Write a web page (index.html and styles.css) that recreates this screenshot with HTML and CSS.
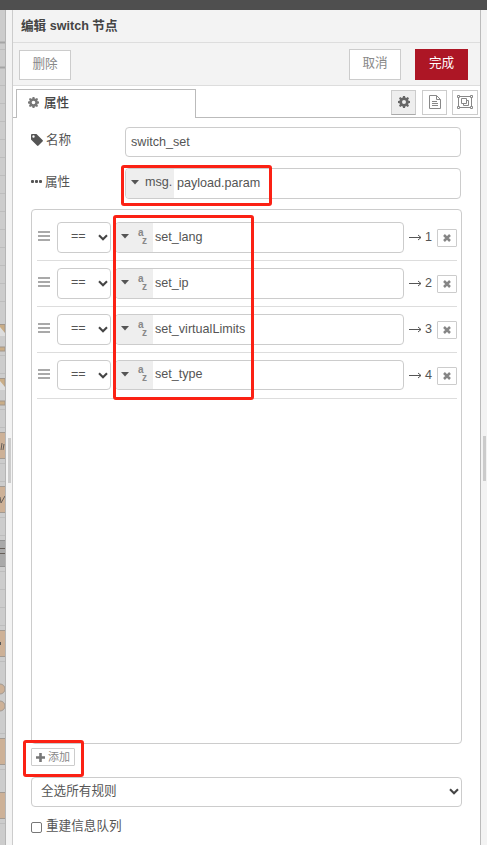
FILE: index.html
```html
<!DOCTYPE html>
<html lang="zh-CN">
<head>
<meta charset="utf-8">
<title>编辑 switch 节点</title>
<link rel="stylesheet" href="styles.css">
</head>
<body>
<svg class="defs" width="0" height="0" aria-hidden="true">
  <symbol id="gear" viewBox="0 0 12 12"><path fill-rule="evenodd" d="M5 0h2l.3 1.6 1 .4L9.7 1 11 2.3l-.9 1.4.4 1L12 5v2l-1.5.3-.4 1 .9 1.4L9.7 11l-1.4-.9-1 .4L7 12H5l-.3-1.5-1-.4-1.4.9L1 9.7l.9-1.4-.4-1L0 7V5l1.5-.3.4-1L1 2.3 2.3 1l1.4 1 1-.4zM6 4a2 2 0 1 0 0 4 2 2 0 0 0 0-4z"/></symbol>
  <symbol id="down" viewBox="0 0 10 7"><path d="M1 1.3 5 5.2 9 1.3" fill="none" stroke="#444" stroke-width="2.1"/></symbol>
  <symbol id="caret" viewBox="0 0 8 5"><path d="M0 0h8L4 4.5z"/></symbol>
  <symbol id="cross" viewBox="0 0 8 8"><path d="M1 1l6 6M7 1 1 7" fill="none" stroke="#868686" stroke-width="2.5"/></symbol>
  <symbol id="bars" viewBox="0 0 12 10"><path d="M0 1h12M0 5h12M0 9h12" fill="none" stroke="#a9a9a9" stroke-width="2"/></symbol>
</svg>
<div class="topbar"></div>
<div class="workspace">
  <svg class="canvas" width="6" height="835" viewBox="0 10 6 835">
    <path fill="#ccc" d="M0 10h6v835H0z"/>
    <path stroke="#bdbdbd" d="M0 49.500h5M0 85.500h5M0 103.500h5M0 121.500h5M0 139.500h5M0 157.500h5M0 175.500h5M0 193.500h5M0 211.500h5M0 229.500h5M0 247.500h5M0 265.500h5M0 283.500h5M0 301.500h5M0 355.500h5M0 373.500h5M0 409.500h5M0 427.500h5M0 463.500h5M0 481.500h5M0 517.500h5M0 535.500h5M0 571.500h5M0 589.500h5M0 607.500h5M0 625.500h5M0 661.500h5M0 733.500h5M0 769.500h5M0 823.500h5"/>
    <path stroke="#a5a5a5" stroke-width="2" d="M0 42.500h5M0 67.500h5"/>
    <g fill="#c9ad87" stroke="#a2968a"><path d="M-2 324.500h7v10h-7zM-2 347h7v4h-7zM-2 378.500h7v10h-7zM-2 401h7v4h-7z"/></g>
    <path fill="#ddd" d="M0 327l5 6v3H0zM0 381l5 6v3H0z"/>
    <g fill="#cdb197" stroke="#a39a91"><path d="M-2 432.500h8v26h-8zM-2 486.500h8v26h-8zM-2 630.500h8v26h-8zM-2 738.500h8v26h-8zM-2 792.500h8v26h-8z"/><circle cx="0" cy="689" r="5"/><circle cx="0" cy="706" r="5"/></g>
    <path fill="#a9a9a9" stroke="#929292" d="M-2 540.500h8v26h-8z"/>
    <path fill="none" stroke="#665f59" d="M0 548.500h5M0 553.500h5M1 450l1-7M3 450l1-6M0 497l1 6 4-7"/>
    <path fill="#555" d="M0 642h1v3H0z"/>
    <path fill="#b5b5b5" d="M5 10h1v835H5z"/>
  </svg>
  <div class="resizer"><span class="grip"></span></div>
  <main class="tray">
    <header class="title">编辑 switch 节点</header>
    <div class="toolbar">
      <button class="btn delete">删除</button>
      <button class="btn cancel">取消</button>
      <button class="btn done">完成</button>
    </div>
    <div class="tabs">
      <div class="tab"><svg width="11" height="11" fill="#777"><use href="#gear"/></svg><span>属性</span></div>
      <div class="tab-tools">
        <span class="tool active"><svg width="12" height="12" fill="#666"><use href="#gear"/></svg></span>
        <span class="tool"><svg width="12" height="14" viewBox="0 0 12 14" fill="none" stroke="#888"><path d="M.5.500h7l4 4v9H.5zM7.500.500v4h4M3 6.500h5M3 8.500h6M3 10.500h6"/></svg></span>
        <span class="tool last"><svg width="16" height="14" viewBox="0 0 16 14" fill="none" stroke="#888"><path d="M2 1.500h12M2 12.500h12M1.500 2v10M14.500 2v10M4.500 3.500h5v5h-5zM9.500 5.500h2v5h-5v-2"/><path fill="#fff" d="M.5.500h2v2h-2zM13.500.500h2v2h-2zM.5 11.500h2v2h-2zM13.500 11.500h2v2h-2z"/></svg></span>
      </div>
    </div>
    <div class="form">
      <div class="field name">
        <label><svg width="12" height="12" viewBox="0 0 12 12" fill="#555"><path fill-rule="evenodd" d="M0 1Q0 0 1 0h4.500l6 6q.8.700 0 1.500l-4 4q-.8.800-1.500 0L0 5.500zM2.500 1.300a1.200 1.200 0 1 0 0 2.400 1.200 1.200 0 0 0 0-2.400z"/></svg><span>名称</span></label>
        <div class="input">switch_set</div>
      </div>
      <div class="field prop">
        <label><svg width="11" height="3" viewBox="0 0 11 3" fill="#555"><rect width="3" height="3" rx="1"/><rect x="4" width="3" height="3" rx="1"/><rect x="8" width="3" height="3" rx="1"/></svg><span>属性</span></label>
        <div class="input typed"><span class="type msg"><svg width="8" height="5" fill="#555"><use href="#caret"/></svg><span>msg.</span></span><span class="value">payload.param</span></div>
      </div>
      <div class="rules">
        <div class="rule"><svg class="handle" width="12" height="10"><use href="#bars"/></svg><div class="op"><span>==</span><svg width="10" height="7"><use href="#down"/></svg></div><div class="input typed"><span class="type"><svg width="8" height="5" fill="#555"><use href="#caret"/></svg><span class="az"><i>a</i><i>z</i></span></span><span class="value">set_lang</span></div><svg class="arrow" width="13" height="7" viewBox="0 0 13 7"><path d="M0 3.500h12M9 1l3 2.500L9 6" fill="none" stroke="#555"/></svg><span class="num">1</span><span class="remove"><svg width="8" height="8"><use href="#cross"/></svg></span></div>
        <div class="rule"><svg class="handle" width="12" height="10"><use href="#bars"/></svg><div class="op"><span>==</span><svg width="10" height="7"><use href="#down"/></svg></div><div class="input typed"><span class="type"><svg width="8" height="5" fill="#555"><use href="#caret"/></svg><span class="az"><i>a</i><i>z</i></span></span><span class="value">set_ip</span></div><svg class="arrow" width="13" height="7" viewBox="0 0 13 7"><path d="M0 3.500h12M9 1l3 2.500L9 6" fill="none" stroke="#555"/></svg><span class="num">2</span><span class="remove"><svg width="8" height="8"><use href="#cross"/></svg></span></div>
        <div class="rule"><svg class="handle" width="12" height="10"><use href="#bars"/></svg><div class="op"><span>==</span><svg width="10" height="7"><use href="#down"/></svg></div><div class="input typed"><span class="type"><svg width="8" height="5" fill="#555"><use href="#caret"/></svg><span class="az"><i>a</i><i>z</i></span></span><span class="value">set_virtualLimits</span></div><svg class="arrow" width="13" height="7" viewBox="0 0 13 7"><path d="M0 3.500h12M9 1l3 2.500L9 6" fill="none" stroke="#555"/></svg><span class="num">3</span><span class="remove"><svg width="8" height="8"><use href="#cross"/></svg></span></div>
        <div class="rule short"><svg class="handle" width="12" height="10"><use href="#bars"/></svg><div class="op"><span>==</span><svg width="10" height="7"><use href="#down"/></svg></div><div class="input typed"><span class="type"><svg width="8" height="5" fill="#555"><use href="#caret"/></svg><span class="az"><i>a</i><i>z</i></span></span><span class="value">set_type</span></div><svg class="arrow" width="13" height="7" viewBox="0 0 13 7"><path d="M0 3.500h12M9 1l3 2.500L9 6" fill="none" stroke="#555"/></svg><span class="num">4</span><span class="remove"><svg width="8" height="8"><use href="#cross"/></svg></span></div>
      </div>
      <button class="add"><svg width="9" height="9" viewBox="0 0 9 9"><path d="M4.500 0v9M0 4.500h9" stroke="#777" stroke-width="2.600"/></svg><span>添加</span></button>
      <div class="select"><span>全选所有规则</span><svg width="10" height="7"><use href="#down"/></svg></div>
      <label class="check"><span class="box"></span><span>重建信息队列</span></label>
    </div>
  </main>
  <div class="edge"><span class="grip"></span></div>
</div>
<div class="mark mark-prop"></div>
<div class="mark mark-rules"></div>
<div class="mark mark-add"></div>
</body>
</html>
```

FILE: styles.css
```css
* { box-sizing: border-box; }
body { margin: 0; width: 487px; height: 845px; overflow: hidden; position: relative; background: #fff; color: #555; font: 12.6px/18px "Liberation Sans", "Noto Sans CJK SC", sans-serif; }
svg { display: block; flex: none; }
.defs { position: absolute; }
button { font: inherit; padding: 0; margin: 0; display: flex; align-items: center; justify-content: center; }
.topbar { height: 10px; background: #4f4f4f; }
.workspace { display: flex; height: 835px; }
.resizer { width: 7px; background: #f3f3f3; border-right: 1px solid #ccc; padding: 428px 0 0 2px; }
.grip { display: block; width: 3px; height: 45px; background: #ccc; }
.edge { width: 7px; background: #f3f3f3; border-left: 1px solid #bbb; padding: 426px 0 0 2px; }
.tray { width: 467px; }
.title { height: 33px; background: #f3f3f3; border-bottom: 1px solid #ddd; padding: 7px 8px 0; font-weight: bold; color: #444; }
.toolbar { height: 43px; background: #f3f3f3; border-bottom: 1px solid #ddd; display: flex; padding: 6px 12px 0 6px; }
.btn { width: 52px; height: 31px; background: #fff; border: 1px solid #ccc; color: #888; padding-bottom: 3px; }
.delete { height: 30px; margin: 1px auto 0 0; }
.done { width: 53px; margin-left: 14px; background: #ad1625; border-color: #ad1625; color: #fff; }
.tabs { height: 32px; display: flex; align-items: flex-end; }
.tabs::before { content: ""; width: 3px; border-bottom: 1px solid #bbb; }
.tab { width: 180px; height: 29px; border: 1px solid #bbb; border-bottom: 0; display: flex; align-items: center; padding: 0 0 3px 11px; gap: 5px; font-weight: 500; color: #444; }
.tab-tools { flex: 1; height: 32px; border-bottom: 1px solid #bbb; display: flex; justify-content: flex-end; padding: 4px 2px 0 0; gap: 6px; }
.tool { width: 25px; height: 25px; border: 1px solid #ccc; display: flex; align-items: center; justify-content: center; padding-bottom: 2px; }
.tool.active { background: #eee; border-bottom-color: #aaa; }
.tool.last { width: 26px; margin-left: -1px; }
.form { padding: 9px 18px 0; }
.field { display: flex; }
.field label { width: 94px; display: flex; align-items: center; gap: 3px; padding-bottom: 4px; }
.input { border: 1px solid #ccc; border-radius: 4px; flex: 1; display: flex; align-items: center; overflow: hidden; white-space: nowrap; }
.name { height: 30px; margin: 0 1px 11px 0; }
.name .input { padding-left: 5px; }
.prop { height: 31px; margin: 0 1px 10px 0; }
.type { align-self: stretch; width: 37px; background: #eee; display: flex; align-items: center; padding-left: 5px; gap: 9px; }
.msg { width: 48px; padding: 0 0 3px 5px; gap: 6px; }
.value { padding: 0 0 2px 3px; }
.rules { height: 535px; border: 1px solid #ccc; border-radius: 4px; padding: 5px 4px 0 5px; }
.rule { height: 46px; border-bottom: 1px solid #ddd; display: flex; padding: 7px 0; }
.rule.short .input, .rule.short .op { height: 30px; }
.handle { margin: 9px 7px 0 1px; }
.op { width: 54px; height: 31px; border: 1px solid #ccc; border-radius: 4px; display: flex; align-items: center; justify-content: space-between; padding: 0 2px 0 13px; margin-right: 4px; }
.op span { padding-bottom: 3px; }
.rule .input { height: 31px; }
.rule .type { padding-bottom: 2px; }
.rule .value { padding-left: 2px; }
.az { width: 10px; font-size: 10px; line-height: 8px; font-weight: bold; color: #888; }
.az i { display: block; font-style: normal; }
.az i + i { padding-left: 4px; }
.arrow { margin: 12px 3px 0 5px; }
.num { width: 12px; padding-top: 6px; }
.remove { width: 20px; height: 18px; border: 1px solid #ccc; border-radius: 1px; margin-top: 7px; display: flex; align-items: center; justify-content: center; }
.add { width: 44px; height: 18px; margin-top: 4px; background: #fff; border: 1px solid #ccc; border-radius: 1px; color: #888; font-size: 11px; gap: 3px; }
.select { height: 30px; margin-top: 11px; border: 1px solid #ccc; border-radius: 4px; display: flex; align-items: center; justify-content: space-between; padding: 0 2px 2px 9px; }
.check { display: flex; align-items: center; gap: 4px; margin-top: 10px; }
.box { width: 11px; height: 11px; border: 1px solid #777; border-radius: 2px; margin-top: 2px; }
.mark { position: absolute; border: 3px solid #fb2114; border-radius: 3px; }
.mark-prop { left: 121px; top: 165px; width: 151px; height: 41px; }
.mark-rules { left: 113px; top: 215px; width: 141px; height: 185px; }
.mark-add { left: 23px; top: 740px; width: 61px; height: 37px; }
```
